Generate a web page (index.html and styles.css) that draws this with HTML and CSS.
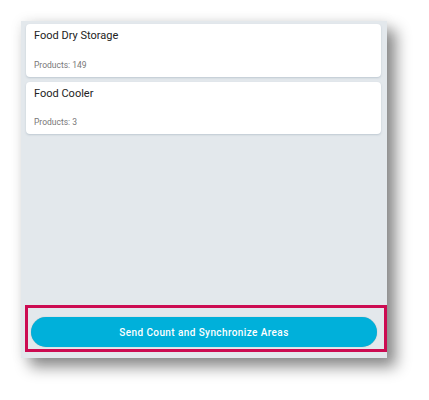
FILE: index.html
```html
<!DOCTYPE html>
<html>
<head>
<meta charset="utf-8">
<link rel="stylesheet" href="styles.css">
</head>
<body>
<div class="panel">
  <div class="list">
    <div class="card card-first">
      <div class="card-title">Food Dry Storage</div>
      <div class="card-meta">Products: 149</div>
    </div>
    <div class="card">
      <div class="card-title">Food Cooler</div>
      <div class="card-meta">Products: 3</div>
    </div>
  </div>
  <div class="footer">
    <button class="sync-btn">Send Count and Synchronize Areas</button>
  </div>
</div>
</body>
</html>
```
FILE: styles.css
```css
html, body {
  margin: 0;
  padding: 0;
  background: #ffffff;
}
body {
  width: 429px;
  height: 400px;
  overflow: hidden;
  font-family: Roboto, "Liberation Sans", sans-serif;
}
.panel {
  margin: 21px 0 0 21px;
  width: 366px;
  height: 337px;
  background: #e3e8ec;
  display: flex;
  flex-direction: column;
  box-shadow: 9px 9px 14px rgba(0, 0, 0, 0.45), 0 0 12px rgba(0, 0, 0, 0.08);
}
.list {
  flex: 1;
  display: flex;
  flex-direction: column;
  gap: 5px;
  padding: 3px 6px 0 5px;
}
.card {
  background: #ffffff;
  border-radius: 4px;
  box-shadow: 0 1px 2px rgba(120, 140, 160, 0.35);
  height: 52px;
  box-sizing: border-box;
  padding: 5px 8px 6px 8px;
  display: flex;
  flex-direction: column;
  justify-content: space-between;
}
.card-first {
  height: 53px;
}
.card-title {
  font-size: 11px;
  color: #222222;
  line-height: 14px;
}
.card-meta {
  font-size: 8.5px;
  color: #777777;
  line-height: 11px;
}
.footer {
  margin: 0 0 6px 4px;
  border: 3px solid #cc0c52;
  padding: 9px 7px 2px 3px;
}
.sync-btn {
  display: block;
  width: 100%;
  height: 30px;
  border: none;
  border-radius: 15px;
  background: #00b0da;
  color: #ffffff;
  font-family: Roboto, "Liberation Sans", sans-serif;
  font-weight: 500;
  font-size: 10px;
  letter-spacing: 0.4px;
  box-shadow: 0 0 1px rgba(0, 0, 0, 0.3);
  padding: 0;
}
```
